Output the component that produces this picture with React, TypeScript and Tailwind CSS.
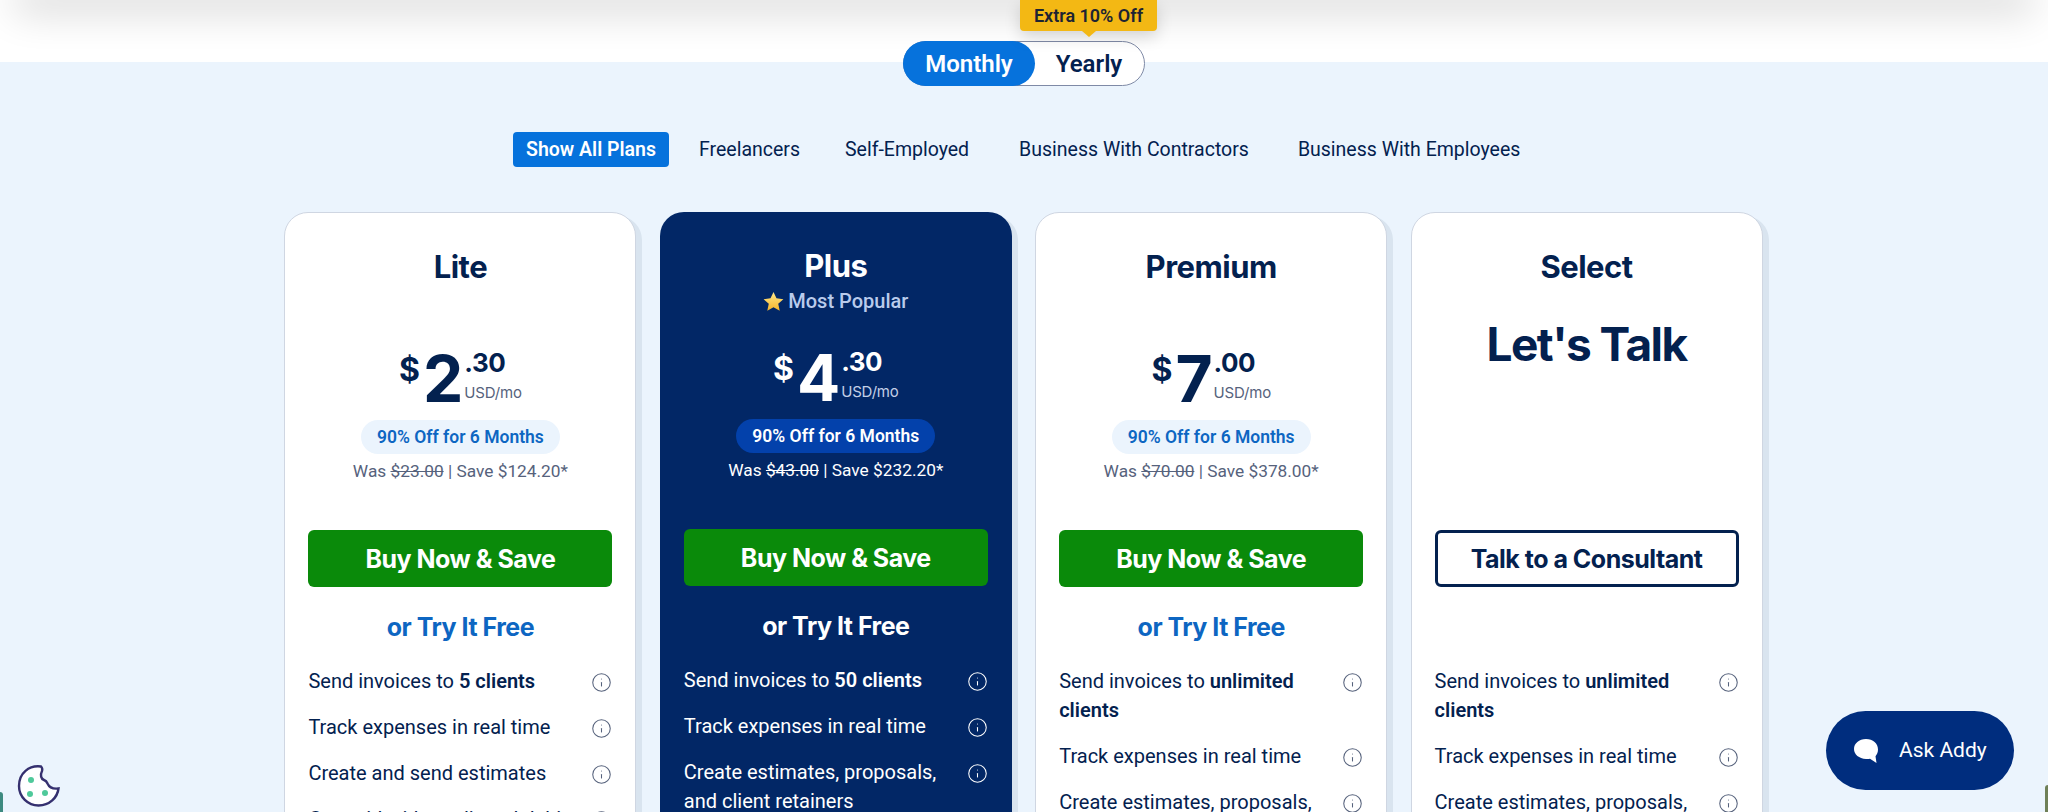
import React from 'react';
import { Info } from 'lucide-react';

interface Plan {
  name: string;
  popular?: boolean;
  whole?: string;
  cents?: string;
  was?: string;
  save?: string;
  features: React.ReactNode[];
}

const plans: Plan[] = [
  {
    name: 'Lite',
    whole: '2',
    cents: '.30',
    was: '$23.00',
    save: '$124.20',
    features: [
      <>Send invoices to <b className="font-semibold">5 clients</b></>,
      'Track expenses in real time',
      'Create and send estimates',
      'Get paid with credit and debit cards',
    ],
  },
  {
    name: 'Plus',
    popular: true,
    whole: '4',
    cents: '.30',
    was: '$43.00',
    save: '$232.20',
    features: [
      <>Send invoices to <b className="font-semibold">50 clients</b></>,
      'Track expenses in real time',
      'Create estimates, proposals, and client retainers',
    ],
  },
  {
    name: 'Premium',
    whole: '7',
    cents: '.00',
    was: '$70.00',
    save: '$378.00',
    features: [
      <>Send invoices to <b className="font-semibold">unlimited clients</b></>,
      'Track expenses in real time',
      'Create estimates, proposals, and client retainers',
    ],
  },
  {
    name: 'Select',
    features: [
      <>Send invoices to <b className="font-semibold">unlimited clients</b></>,
      'Track expenses in real time',
      'Create estimates, proposals, and client retainers',
    ],
  },
];

const heading = { fontFamily: 'Inter, "Liberation Sans", sans-serif' };

const Star = () => (
  <svg width="21" height="21" viewBox="0 0 24 24" className="shrink-0">
    <defs>
      <linearGradient id="star" x1="0" y1="0" x2="0" y2="1">
        <stop offset="0" stopColor="#ffe98a" />
        <stop offset="1" stopColor="#f5b32a" />
      </linearGradient>
    </defs>
    <path d="M12 1l3.400 7.400 7.900.9-5.900 5.400 1.700 8L12 18.600l-7.100 4.100 1.700-8L.7 9.300l7.900-.9z" fill="url(#star)" />
  </svg>
);

const PlanCard = ({ plan }: { plan: Plan }) => {
  const dark = !!plan.popular;
  return (
    <div
      className={`w-[352px] h-[700px] shrink-0 rounded-[24px] pt-[34px] shadow-[6px_4px_0_#d9e4ef] ${
        dark ? 'px-6 bg-[#022766] text-white' : 'px-[23px] bg-white text-[#03214f] border border-[#cfd6e2]'
      }`}
    >
      <div className="h-[72px] flex flex-col items-center">
        <h3 style={heading} className="text-[31px] leading-[40px] font-bold tracking-[-0.5px]">{plan.name}</h3>
        {plan.popular && (
          <div className="flex items-center gap-[4px] text-[20px] leading-[24px] font-medium text-[#b9cbec] mt-[3px]">
            <Star />
            Most Popular
          </div>
        )}
      </div>

      <div className="h-[211px] flex flex-col items-center">
        {plan.whole ? (
          <>
            <div style={heading} className="flex mt-[29px] h-[60px] font-bold">
              <span className="text-[32px] leading-[38px] mt-[3px] mr-[3px]">$</span>
              <span className="text-[64px] leading-[62px] mr-[1px]">{plan.whole}</span>
              <div className="flex flex-col">
                <span className="text-[26px] leading-[30px] tracking-[-0.5px]">{plan.cents}</span>
                <span className={`text-[15px] leading-[20px] font-normal tracking-[-0.2px] mt-[5px] ${dark ? 'text-[#c3cfe6]' : 'text-[#56627c]'}`}>USD/mo</span>
              </div>
            </div>
            <div className={`mt-[12px] h-[34px] w-[199px] rounded-full flex items-center justify-center text-[17.5px] font-semibold ${dark ? 'bg-[#0341ab] text-white' : 'bg-[#ebf4fd] text-[#0d66c2]'}`}>
              90% Off for 6 Months
            </div>
            <p className={`mt-[5px] text-[17.3px] leading-[24px] ${dark ? 'text-white' : 'text-[#56627c]'}`}>
              Was <s>{plan.was}</s> | Save {plan.save}*
            </p>
          </>
        ) : (
          <div style={heading} className="-mt-[5px] text-[46px] leading-[60px] font-bold tracking-[-1.5px]">Let's Talk</div>
        )}
      </div>

      {plan.whole ? (
        <button style={heading} className="w-full h-[57px] pt-[3px] rounded-[6px] bg-[#0a8a0a] text-white text-[25px] font-bold tracking-[-0.5px]">
          Buy Now &amp; Save
        </button>
      ) : (
        <button style={heading} className="w-full h-[57px] pt-[2px] rounded-[6px] border-[3px] border-[#03214f] text-[25px] font-bold tracking-[-0.5px]">
          Talk to a Consultant
        </button>
      )}

      <div style={heading} className={`h-[80px] pt-[2px] flex items-center justify-center text-[25px] font-bold tracking-[-0.5px] ${dark ? 'text-white' : 'text-[#0d66c2]'}`}>
        {plan.whole ? 'or Try It Free' : ''}
      </div>

      <ul className="flex flex-col gap-[17px]">
        {plan.features.map((f, i) => (
          <li key={i} className="flex justify-between text-[20px] leading-[29px]">
            <span className="w-[262px]">{f}</span>
            <Info size={21} strokeWidth={1.2} className={`mt-[5px] shrink-0 ${dark ? 'text-white' : 'text-[#56627c]'}`} />
          </li>
        ))}
      </ul>
    </div>
  );
};

export default function App() {
  return (
    <div
      style={{ fontFamily: 'Roboto, "Noto Sans", sans-serif' }}
      className="relative w-[2048px] h-[812px] overflow-hidden bg-[#ebf4fd] text-[#03214f]"
    >
      <div className="h-[62px] bg-white overflow-hidden">
        <div className="h-[2px] -mt-[2px] mx-[24px] shadow-[0_0_40px_10px_rgba(0,0,0,0.2)]" />
      </div>

      <div className="-mt-[21px] flex justify-center">
        <div className="relative flex w-[242px] h-[45px] rounded-full border border-[#7f8aa6] bg-white text-[24px] font-semibold">
          <div className="w-[132px] -m-px h-[45px] pt-[1px] rounded-full bg-[#0672dc] text-white flex items-center justify-center">Monthly</div>
          <div className="flex-1 pt-[1px] flex items-center justify-center">Yearly</div>
          <div className="absolute -top-[42px] left-[116px] w-[137px] h-[31px] rounded-b-[4px] bg-[#f3b814] text-[#1d2433] text-[18px] font-semibold flex items-center justify-center shadow-[0_6px_16px_rgba(0,0,0,0.15)]">
            Extra 10% Off
            <span className="absolute left-[62px] -bottom-[6px] border-x-[7px] border-x-transparent border-t-[6px] border-t-[#f3b814]" />
          </div>
        </div>
      </div>

      <div className="mt-[46px] ml-[513px] flex items-center h-[35px] text-[19.5px]">
        <div className="w-[156px] h-[35px] rounded-[4px] bg-[#0672dc] text-white font-semibold flex items-center justify-center">Show All Plans</div>
        <span className="ml-[30px]">Freelancers</span>
        <span className="ml-[45px]">Self-Employed</span>
        <span className="ml-[50px]">Business With Contractors</span>
        <span className="ml-[49px]">Business With Employees</span>
      </div>

      <div className="mt-[45px] pr-[1px] flex justify-center gap-[23.4px]">
        {plans.map(p => <PlanCard key={p.name} plan={p} />)}
      </div>

      <div className="absolute left-[1826px] top-[711px] w-[188px] h-[79px] rounded-full bg-[#002d7e] text-white flex items-center">
        <svg width="28" height="28" viewBox="0 0 28 28" className="ml-[27px]">
          <path d="M13 2c7 0 12 4.500 12 10.500 0 2.800-1 5-2.500 6.800L23.500 26l-6.500-4.200c-1.300.3-2.700.4-4 .2C6 21.500 1 17.500 1 12S6 2 13 2z" fill="#fff" />
        </svg>
        <span className="ml-[18px] text-[21px] font-normal">Ask Addy</span>
      </div>

      <svg width="46" height="46" viewBox="0 0 46 46" className="absolute left-[15px] top-[763px]">
        <path d="M26 3.500C14 2 4 10 4 23c0 11 9 19.500 19.500 19.500 11 0 19-8 20-17-4 .5-9-.5-11-5-1-2.500-2-3-3.500-3.500C26 16 25 12 27 8c.5-1.500 0-3.500-1-4.500z" fill="#fff" stroke="#35306f" strokeWidth="2.400" />
        <circle cx="16" cy="17" r="3" fill="#4fc99a" />
        <circle cx="15" cy="31" r="3" fill="#4fc99a" />
        <circle cx="30" cy="30" r="3" fill="#4fc99a" />
      </svg>

      {/* edges of the decoration behind the page */}
      <div className="absolute right-0 top-[785px] w-[3px] h-[27px] rounded-tl-full bg-[#6f8058]" />
      <div className="absolute left-0 top-[792px] w-[3px] h-[20px] rounded-tr-full bg-[#3d8a80]" />
    </div>
  );
}
